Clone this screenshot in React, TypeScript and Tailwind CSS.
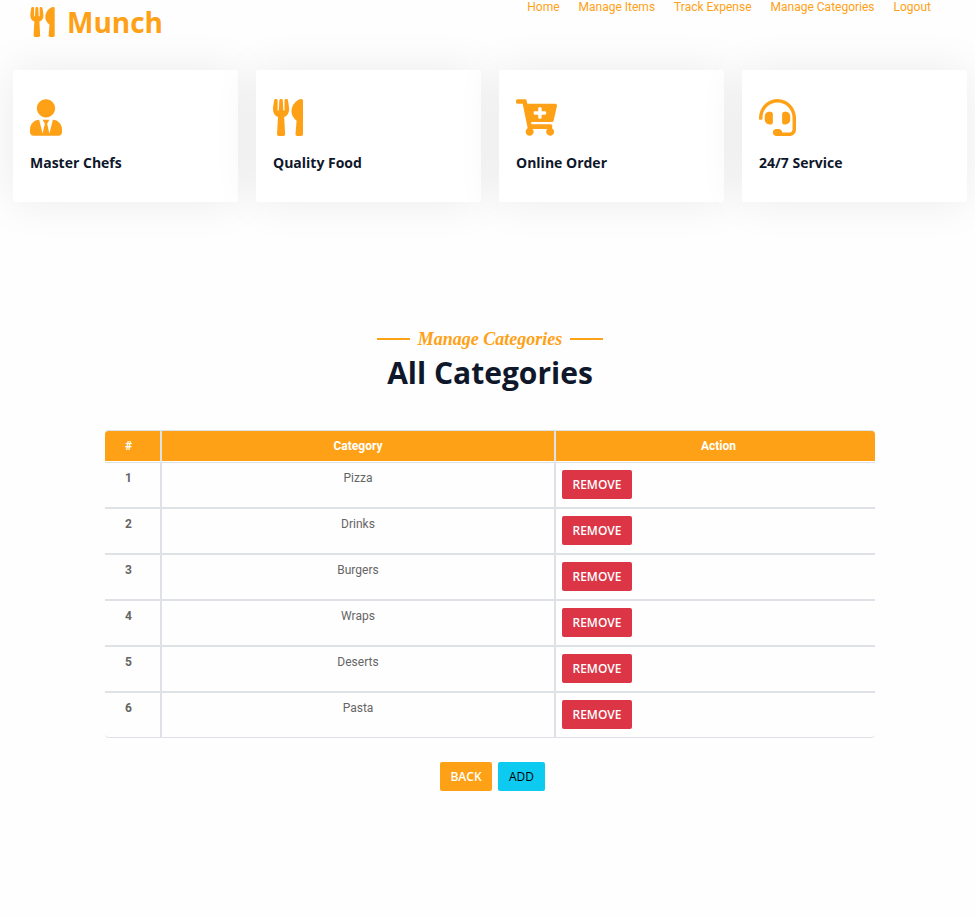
import { FaCartPlus, FaHeadset, FaUserTie, FaUtensils } from 'react-icons/fa';

const links = ['Home', 'Manage Items', 'Track Expense', 'Manage Categories', 'Logout'];

const services = [
  { title: 'Master Chefs', Icon: FaUserTie, iconSize: 'h-[37px] w-8' },
  { title: 'Quality Food', Icon: FaUtensils, iconSize: 'h-[37px] w-[30px]' },
  { title: 'Online Order', Icon: FaCartPlus, iconSize: 'h-[37px] w-[41px]' },
  { title: '24/7 Service', Icon: FaHeadset, iconSize: 'h-[37px] w-[37px]' },
];

const categories = ['Pizza', 'Drinks', 'Burgers', 'Wraps', 'Deserts', 'Pasta'];

function Header() {
  return (
    <header className="flex items-start justify-between pl-[17px] pr-9 text-[#fea116]">
      <a href="#home" className="flex items-center gap-3 pt-1 font-['Open_Sans',sans-serif] text-[28px] font-bold leading-9">
        <FaUtensils className="h-[30px] w-[25px]" aria-hidden="true" />
        <h1>Munch</h1>
      </a>
      <nav className="flex gap-[19px] text-xs leading-[14px]">
        {links.map((label) => (
          <a key={label} href="#menu">{label}</a>
        ))}
      </nav>
    </header>
  );
}

function Services() {
  return (
    <section className="mt-[30px] grid grid-cols-4 gap-[18px]">
      {services.map(({ title, Icon, iconSize }) => (
        <article key={title} className="h-[132px] rounded-[2px] bg-white px-[17px] pt-[29px] shadow-[0_0_45px_rgba(0,0,0,0.08)]">
          <Icon className={`${iconSize} text-[#fea116]`} aria-hidden="true" />
          <h5 className="mt-[18px] font-['Open_Sans',sans-serif] text-sm font-bold leading-[18px] text-[#0f172b]">{title}</h5>
        </article>
      ))}
    </section>
  );
}

function CategoryTable() {
  return (
    <table className="mx-auto mt-[37px] w-full max-w-[770px] table-fixed border-separate border-spacing-0 text-xs leading-4">
      <colgroup>
        <col className="w-[57px]" />
        <col className="w-[394px]" />
        <col />
      </colgroup>
      <thead className="text-white">
        <tr className="h-8">
          <th className="rounded-tl-[4px] border-b border-r-2 border-t border-b-white border-r-[#dee2e6] border-t-[#dee2e6] bg-[#fea116] pr-2 font-bold">#</th>
          <th className="border-b border-r-2 border-t border-b-white border-r-[#dee2e6] border-t-[#dee2e6] bg-[#fea116] font-bold">Category</th>
          <th className="rounded-tr-[4px] border-b border-t border-b-white border-t-[#dee2e6] bg-[#fea116] pl-[6px] font-bold">Action</th>
        </tr>
      </thead>
      <tbody className="[&>tr:first-child>*]:border-t [&>tr:last-child>*]:border-b [&>tr:last-child>*:first-child]:rounded-bl-[4px] [&>tr:last-child>*:last-child]:rounded-br-[4px]">
        {categories.map((name, index) => (
          <tr key={name} className="align-top [&>*]:border-b-2 [&>*]:border-[#dee2e6]">
            <th className="border-r-2 pr-2 pt-[7px] font-bold">{index + 1}</th>
            <td className="border-r-2 pt-[7px] text-center">{name}</td>
            <td className="pb-2 pl-[6px] pt-[7px]">
              <button type="button" className="block h-[29px] w-[70px] rounded-[2px] bg-[#dc3545] font-['Open_Sans',sans-serif] text-xs font-semibold text-white">REMOVE</button>
            </td>
          </tr>
        ))}
      </tbody>
    </table>
  );
}

export default function App() {
  return (
    <div className="min-h-screen overflow-hidden bg-[#fefefe] pl-[13px] pr-2 font-[Roboto,sans-serif] text-[#666565]">
      <Header />
      <Services />
      <main className="mt-[125px] text-center">
        <h5 className="flex items-center justify-center gap-2 font-['Liberation_Serif',serif] text-lg font-bold italic leading-6 text-[#fea116]">
          <span className="h-[2px] w-[33px] bg-[#fea116]" />
          Manage Categories
          <span className="h-[2px] w-[33px] bg-[#fea116]" />
        </h5>
        <h1 className="mt-[2px] font-['Open_Sans',sans-serif] text-[30px] font-bold leading-10 text-[#0f172b]">All Categories</h1>
        <CategoryTable />
        <div className="mt-6 flex justify-center gap-[6px] pl-[5px] font-['Open_Sans',sans-serif] text-xs">
          <button type="button" className="h-[29px] w-[52px] rounded-[2px] bg-[#fea116] font-semibold text-white">BACK</button>
          <button type="button" className="h-[29px] w-[47px] rounded-[2px] bg-[#0dcaf0] font-medium text-black">ADD</button>
        </div>
      </main>
    </div>
  );
}
